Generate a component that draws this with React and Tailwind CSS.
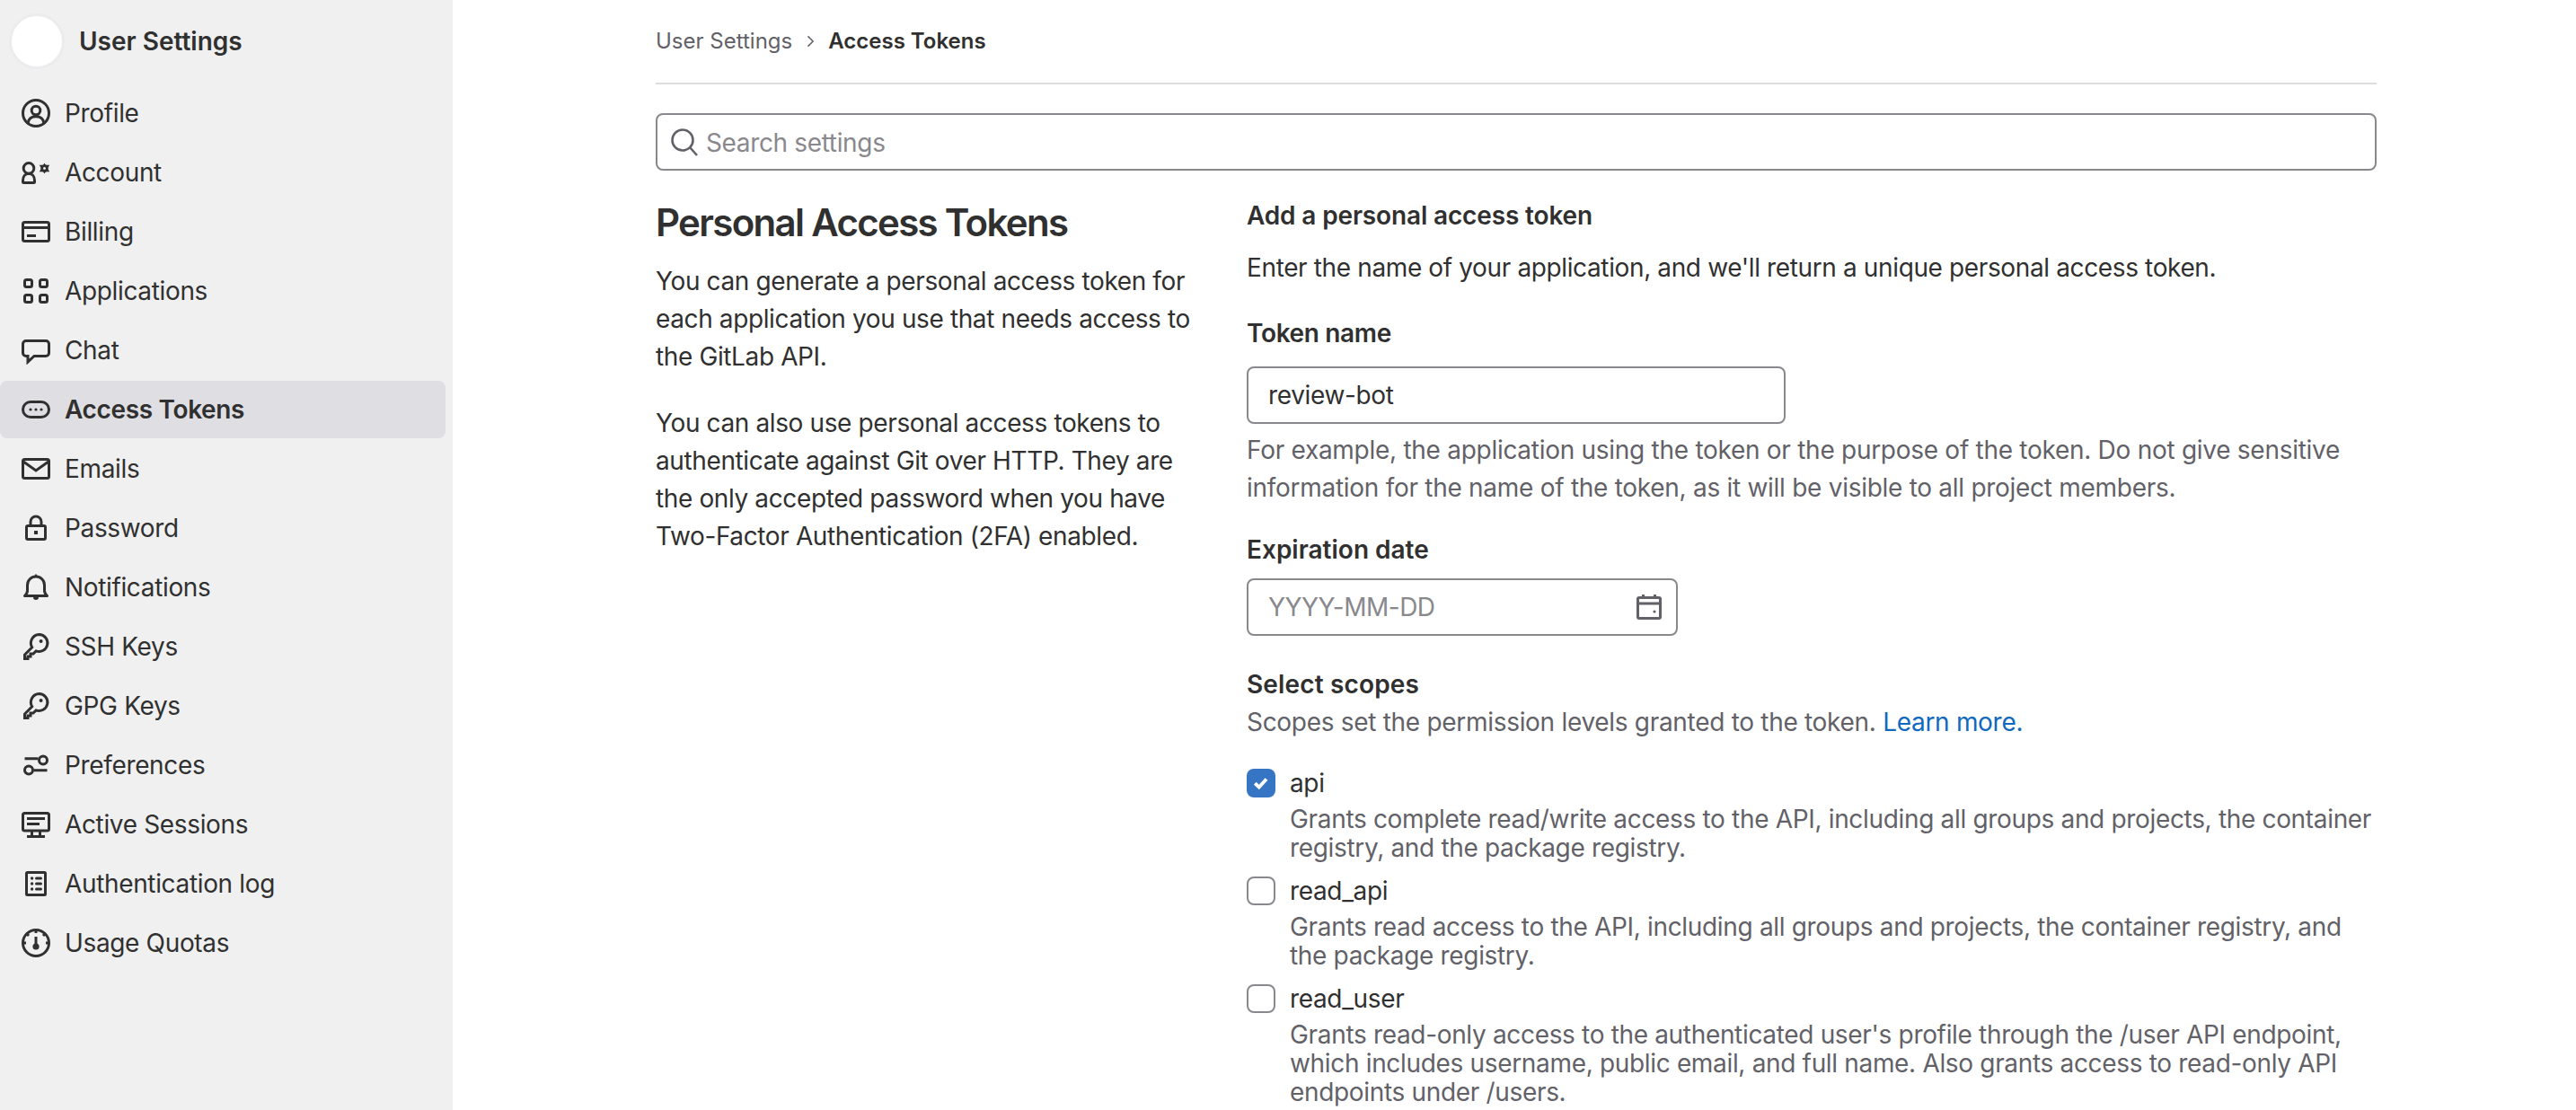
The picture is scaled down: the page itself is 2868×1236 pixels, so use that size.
import React from "react";

const S = ({ children, className = "w-8 h-8 shrink-0" }) => (
  <svg viewBox="0 0 16 16" fill="none" stroke="currentColor" strokeWidth="1.5" strokeLinecap="round" strokeLinejoin="round" className={className}>
    {children}
  </svg>
);

function Key() {
  return (
    <S>
      <path d="M9.750 1.250a4.750 4.750 0 1 1-1.700 9.200L6.500 12H5v1.500H3.500v1.250H1.750V12.500l4.100-4.100a4.750 4.750 0 0 1 3.900-7.150z" strokeLinejoin="miter" />
      <circle cx="10.800" cy="5" r="1" fill="currentColor" stroke="none" />
    </S>
  );
}

const icons = {
  Profile: (
    <S>
      <circle cx="8" cy="8" r="7.25" />
      <circle cx="8" cy="6.5" r="2.4" />
      <path d="M3.6 13.5c.3-2.4 2-3.6 4.4-3.6s4.100 1.200 4.400 3.600" />
    </S>
  ),
  Account: (
    <S>
      <circle cx="4" cy="5.700" r="2.900" />
      <path d="M.75 12.500c0-2.200 1.300-3.900 3.250-3.900s3.250 1.700 3.250 3.900v.7c0 .3-.2.5-.5.500H1.250c-.3 0-.5-.2-.5-.500z" />
      <path fill="currentColor" stroke="none" d="M12.750 2.800L15.600 7.600H9.900zM12.750 8.700L9.900 3.900h5.700z" />
      <circle cx="12.750" cy="5.750" r="2.100" fill="currentColor" stroke="none" />
      <circle cx="12.750" cy="5.750" r=".7" fill="#f0f0f0" stroke="none" />
    </S>
  ),
  Billing: (
    <S>
      <rect x=".75" y="2.750" width="14.500" height="10.500" rx="1" />
      <path d="M.75 5.750h14.500" strokeLinecap="butt" />
      <path d="M3 10.250h5" strokeLinecap="butt" />
    </S>
  ),
  Applications: (
    <S>
      <rect x="1.750" y="1.750" width="4" height="4" rx="1" />
      <rect x="10.250" y="1.750" width="4" height="4" rx="1" />
      <rect x="1.750" y="10.250" width="4" height="4" rx="1" />
      <rect x="10.250" y="10.250" width="4" height="4" rx="1" />
    </S>
  ),
  Chat: (
    <S>
      <path
        strokeLinejoin="miter"
        d="M2.500 2.750h11a1.750 1.750 0 0 1 1.750 1.750v5a1.750 1.750 0 0 1-1.750 1.750H7L3.500 14.500v-3.250h-1A1.750 1.750 0 0 1 .75 9.500v-5A1.750 1.750 0 0 1 2.500 2.750z"
      />
    </S>
  ),
  "Access Tokens": (
    <S>
      <rect x=".75" y="3.750" width="14.500" height="8.500" rx="4.250" />
      <circle cx="5" cy="8" r=".8" fill="currentColor" stroke="none" />
      <circle cx="8" cy="8" r=".8" fill="currentColor" stroke="none" />
      <circle cx="11" cy="8" r=".8" fill="currentColor" stroke="none" />
    </S>
  ),
  Emails: (
    <S>
      <rect x=".75" y="2.750" width="14.500" height="10.500" rx="1" />
      <path d="M1 4l7 5 7-5" strokeLinejoin="miter" />
    </S>
  ),
  Password: (
    <S>
      <rect x="2.750" y="6.750" width="10.500" height="7.500" rx=".75" />
      <path d="M5 6.500V4.500a3 3 0 0 1 6 0v2" />
      <rect x="7" y="9.500" width="2" height="2" fill="currentColor" stroke="none" />
    </S>
  ),
  Notifications: (
    <S>
      <path d="M1.750 12.750h12.500c-.9-.8-1.500-1.600-1.500-3V6.750a4.750 4.750 0 0 0-9.500 0v3c0 1.400-.6 2.200-1.500 3z" />
      <path fill="currentColor" stroke="none" d="M6.500 13.500h3a1.500 1.500 0 0 1-3 0zM7.200 1.500L8 .500l.8 1z" />
    </S>
  ),
  "SSH Keys": <Key />,
  "GPG Keys": <Key />,
  Preferences: (
    <S>
      <path d="M1.750 4.400h7.500M6.750 10.900h7.500" strokeLinecap="butt" />
      <circle cx="12" cy="5.250" r="2.250" />
      <circle cx="4" cy="10.750" r="2.250" />
    </S>
  ),
  "Active Sessions": (
    <S>
      <rect x=".75" y="1.750" width="14.500" height="9.750" rx="1" />
      <path d="M3 4.750h10M3 7.750h7M5.750 12v2.500M10.250 12v2.500M3 14.750h10" strokeLinecap="butt" />
    </S>
  ),
  "Authentication log": (
    <S>
      <rect x="2.750" y="1.750" width="10.500" height="12.500" rx=".5" />
      <path d="M8.250 5h2.500M8.250 8h2.500M8.250 11h2.500" />
      <circle cx="5.800" cy="5" r=".85" fill="currentColor" stroke="none" />
      <circle cx="5.800" cy="8" r=".85" fill="currentColor" stroke="none" />
      <circle cx="5.800" cy="11" r=".85" fill="currentColor" stroke="none" />
    </S>
  ),
  "Usage Quotas": (
    <S>
      <circle cx="8" cy="8" r="7.250" />
      <path d="M8 4.500v5M8 1v1.500M1 8h1.500M13.500 8H15M3 3l1 1M13 3l-1 1" strokeLinecap="butt" />
      <circle cx="8" cy="10" r="1.800" fill="currentColor" stroke="none" />
    </S>
  ),
};

const nav = [
  "Profile",
  "Account",
  "Billing",
  "Applications",
  "Chat",
  "Access Tokens",
  "Emails",
  "Password",
  "Notifications",
  "SSH Keys",
  "GPG Keys",
  "Preferences",
  "Active Sessions",
  "Authentication log",
  "Usage Quotas",
];

const scopes = [
  {
    name: "api",
    checked: true,
    lines: "Grants complete read/write access to the API, including all groups and projects, the container registry, and the package registry.",
  },
  {
    name: "read_api",
    lines: "Grants read access to the API, including all groups and projects, the container registry, and the package registry.",
  },
  {
    name: "read_user",
    lines: "Grants read-only access to the authenticated user's profile through the /user API endpoint, which includes username, public email, and full name. Also grants access to read-only API endpoints under /users.",
  },
];

export default function App() {
  return (
    <div className="flex h-screen overflow-hidden bg-white font-['Inter',sans-serif] text-[28px] leading-[42px] tracking-[-0.35px] text-[#303030]">
      <aside className="w-[504px] shrink-0 bg-[#f0f0f0] pr-2">
        <div className="flex h-[92px] items-center gap-4 pl-[10px]">
          <div className="h-[62px] w-[62px] rounded-full border-[3px] border-[#ececef] bg-white" />
          <span className="font-semibold tracking-normal">User Settings</span>
        </div>
        <nav className="mt-0.5 flex flex-col gap-0.5">
          {nav.map((n) => (
            <div
              key={n}
              className={
                n === "Access Tokens"
                  ? "flex h-16 items-center gap-4 rounded-lg bg-[#dfdfe3] pl-6 font-semibold"
                  : "flex h-16 items-center gap-4 pl-6"
              }
            >
              {icons[n]}
              <span>{n}</span>
            </div>
          ))}
        </nav>
      </aside>

      <main className="flex-1 pr-[222px] pl-[226px]">
        <div className="flex h-[94px] items-center border-b-2 border-[#dcdcde] text-2xl tracking-normal">
          <span className="text-[#626168]">User Settings</span>
          <svg viewBox="0 0 16 16" fill="none" stroke="#626168" strokeWidth="1.2" className="mr-2.5 ml-2.5 h-5 w-5">
            <path d="M6 3.500l4.500 4.500L6 12.500" />
          </svg>
          <span className="font-semibold">Access Tokens</span>
        </div>

        <div className="mt-8 flex h-16 items-center gap-2 rounded-lg border-2 border-[#89888d] pl-[14px]">
          <svg viewBox="0 0 16 16" fill="none" stroke="#626168" strokeWidth="1.3" className="h-8 w-8 shrink-0">
            <circle cx="7" cy="7" r="5.750" />
            <path d="M11 11l4 4.500" />
          </svg>
          <input placeholder="Search settings" className="w-full bg-transparent pt-0.5 text-[28px] tracking-[-0.35px] outline-none placeholder:text-[#89888d]" />
        </div>

        <div className="mt-[29px] flex gap-[54px]">
          <section className="w-[604px] shrink-0 tracking-[-0.38px]">
            <h1 className="mt-1 text-[42px] leading-[50px] font-semibold tracking-[-0.04em]">Personal Access Tokens</h1>
            <p className="mt-[19px]">You can generate a personal access token for each application you use that needs access to the GitLab API.</p>
            <p className="mt-8">You can also use personal access tokens to authenticate against Git over HTTP. They are the only accepted password when you have Two-Factor Authentication (2FA) enabled.</p>
          </section>

          <section className="min-w-0 flex-1">
            <h2 className="font-semibold tracking-[-0.15px]">Add a personal access token</h2>
            <p className="mt-4 tracking-[-0.37px]">Enter the name of your application, and we'll return a unique personal access token.</p>

            <label className="mt-[31px] block font-semibold">Token name</label>
            <div className="mt-4 flex h-16 w-[600px] items-center rounded-lg border-2 border-[#89888d] px-[22px]">review-bot</div>
            <p className="mt-2 tracking-[-0.28px] text-[#626168]">For example, the application using the token or the purpose of the token. Do not give sensitive information for the name of the token, as it will be visible to all project members.</p>

            <label className="mt-[27px] block font-semibold tracking-normal">Expiration date</label>
            <div className="mt-[11px] flex h-16 w-[480px] items-center justify-between rounded-lg border-2 border-[#89888d] pr-[14px] pl-[22px]">
              <span className="tracking-[-0.5px] text-[#89888d]">YYYY-MM-DD</span>
              <svg viewBox="0 0 16 16" fill="none" stroke="#626168" strokeWidth="1.5" className="h-8 w-8">
                <rect x="1.750" y="2.750" width="12.500" height="11.500" rx=".75" />
                <path d="M1.750 6h12.500M4.750 1v2.500M11.250 1v2.500" />
                <circle cx="11" cy="10.500" r=".8" fill="#626168" stroke="none" />
              </svg>
            </div>

            <label className="mt-[33px] block font-semibold tracking-[0.15px]">Select scopes</label>
            <p className="tracking-[-0.3px] text-[#626168]">
              Scopes set the permission levels granted to the token. <span className="text-[#1068bf]">Learn more.</span>
            </p>

            <div className="mt-[31px] flex flex-col gap-[16px]">
              {scopes.map((s) => (
                <div key={s.name} className="flex gap-4">
                  <div
                    className={
                      s.checked
                        ? "flex h-8 w-8 shrink-0 items-center justify-center rounded-lg bg-[#3674c4]"
                        : "h-8 w-8 shrink-0 rounded-lg border-2 border-[#89888d] bg-white"
                    }
                  >
                    {s.checked && (
                      <svg viewBox="0 0 16 16" fill="none" stroke="#ffffff" strokeWidth="2.600" className="h-6 w-6">
                        <path d="M3.500 8.200l3 2.800 5.500-6" />
                      </svg>
                    )}
                  </div>
                  <div className="min-w-0 flex-1">
                    <div className="leading-8">{s.name}</div>
                    <p className="mt-2 leading-8 tracking-[-0.33px] text-[#626168]">{s.lines}</p>
                  </div>
                </div>
              ))}
            </div>
          </section>
        </div>
      </main>
    </div>
  );
}
